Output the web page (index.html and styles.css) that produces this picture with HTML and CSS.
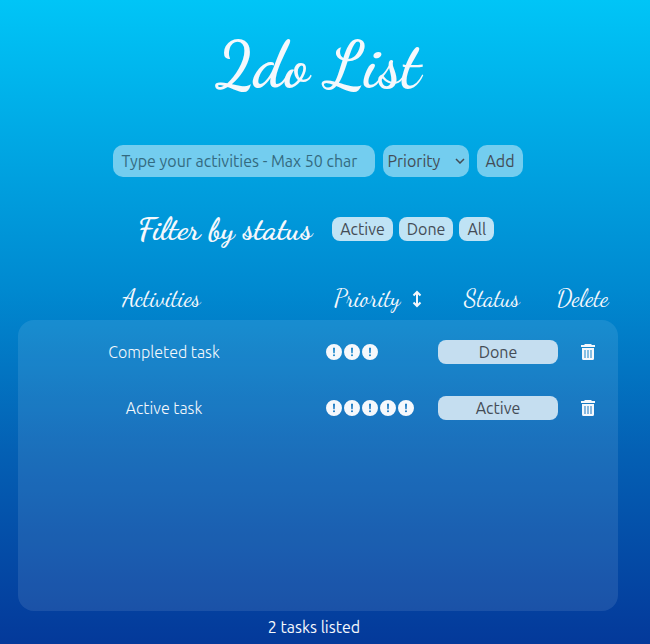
FILE: index.html
```html
<!DOCTYPE html>
<html lang="en">
<head>
<meta charset="utf-8">
<meta name="viewport" content="width=device-width, initial-scale=1">
<title>2do List</title>
<link rel="stylesheet" href="styles.css">
</head>
<body>
<svg class="sprite" aria-hidden="true">
  <symbol id="alert" viewBox="0 0 18 18"><path fill-rule="evenodd" d="M9 1a8 8 0 1 0 0 16A8 8 0 0 0 9 1zM8 4.800h2l-.3 5.400H8.300zM9 11.300a1 1 0 1 1 0 2 1 1 0 0 1 0-2z"/></symbol>
  <symbol id="trash" viewBox="0 0 16 18"><path fill-rule="evenodd" d="M5 1h6l1 1h3v2H1V2h3zM2 5h12v10.500a1.500 1.500 0 0 1-1.500 1.500h-9A1.500 1.500 0 0 1 2 15.500zM4.500 7v8h1V7zM7.500 7v8h1V7zM10.500 7v8h1V7z"/></symbol>
</svg>
<main class="app">
  <h1 class="title">2do List</h1>
  <form class="new-task">
    <input class="field field-text" type="text" maxlength="50" aria-label="Activity" placeholder="Type your activities - Max 50 char">
    <span class="select-wrap">
      <select class="field field-select" aria-label="Priority">
        <option>Priority</option><option>1</option><option>2</option><option>3</option><option>4</option><option>5</option>
      </select>
      <svg class="chevron" viewBox="0 0 10 6" aria-hidden="true"><path d="M1 1l4 4 4-4"/></svg>
    </span>
    <button class="field field-add" type="button">Add</button>
  </form>
  <section class="filter">
    <h2 class="filter-title">Filter by status</h2>
    <div class="filter-buttons">
      <button class="pill" type="button">Active</button>
      <button class="pill" type="button">Done</button>
      <button class="pill" type="button">All</button>
    </div>
  </section>
  <table class="tasks">
    <thead>
      <tr class="head-row">
        <th scope="col">Activities</th>
        <th scope="col" class="head-priority">Priority
          <button class="icon-button" type="button" aria-label="Sort by priority"><svg class="sort" viewBox="0 0 10 18" aria-hidden="true"><path d="M5 2v14M1.500 5.500L5 2l3.500 3.500M1.500 12.500L5 16l3.500-3.500"/></svg></button>
        </th>
        <th scope="col">Status</th>
        <th scope="col">Delete</th>
      </tr>
    </thead>
    <tbody class="panel">
      <tr class="task-row">
        <td class="task-name">Completed task</td>
        <td class="task-priority"><svg class="alert"><use href="#alert"/></svg><svg class="alert"><use href="#alert"/></svg><svg class="alert"><use href="#alert"/></svg></td>
        <td class="task-status"><button class="pill pill-wide" type="button">Done</button></td>
        <td class="task-delete"><button class="icon-button" type="button" aria-label="Delete task"><svg class="trash"><use href="#trash"/></svg></button></td>
      </tr>
      <tr class="task-row">
        <td class="task-name">Active task</td>
        <td class="task-priority"><svg class="alert"><use href="#alert"/></svg><svg class="alert"><use href="#alert"/></svg><svg class="alert"><use href="#alert"/></svg><svg class="alert"><use href="#alert"/></svg><svg class="alert"><use href="#alert"/></svg></td>
        <td class="task-status"><button class="pill pill-wide" type="button">Active</button></td>
        <td class="task-delete"><button class="icon-button" type="button" aria-label="Delete task"><svg class="trash"><use href="#trash"/></svg></button></td>
      </tr>
    </tbody>
  </table>
  <p class="count">2 tasks listed</p>
</main>
</body>
</html>
```
FILE: styles.css
```css
* {
  box-sizing: border-box;
}

html {
  min-height: 100%;
  background: linear-gradient(#00c5f7, #0089d0 45%, #0460b4 70%, #04399a);
}

body {
  margin: 0;
  color: #f5f8fc;
  font: 16px/24px Ubuntu, "Noto Sans", sans-serif;
}

button,
input,
select {
  margin: 0;
  border: 0;
  font: inherit;
  color: #444c55;
}

button {
  cursor: pointer;
}

.sprite {
  position: absolute;
  width: 0;
  height: 0;
}

.app {
  padding: 24px 32px 4px 18px;
}

.title,
.filter-title,
.head-row {
  font-family: "Dancing Script", "Liberation Serif", serif;
}

.title {
  margin: 0;
  text-align: center;
  font-size: 64px;
  line-height: 84px;
  font-weight: 700;
}

.new-task {
  display: flex;
  justify-content: center;
  gap: 8px;
  margin-top: 37px;
}

.field {
  height: 32px;
  padding: 0 8px;
  border-radius: 10px;
  background: #73cdef;
}

.field-text {
  width: 262px;
}

.field-text::placeholder {
  color: #336a80;
  opacity: 1;
}

.select-wrap {
  position: relative;
}

.field-select {
  width: 86px;
  padding: 0 4px;
  appearance: none;
}

.chevron {
  position: absolute;
  right: 4px;
  top: 13px;
  width: 10px;
  height: 6px;
  fill: none;
  stroke: #444c55;
  stroke-width: 1.500;
  pointer-events: none;
}

.filter {
  display: flex;
  justify-content: center;
  align-items: center;
  gap: 20px;
  margin-top: 32px;
  padding-right: 4px;
}

.filter-title {
  margin: 0;
  font-size: 32px;
  line-height: 40px;
  font-weight: 700;
}

.filter-buttons {
  display: flex;
  gap: 6px;
}

.pill {
  height: 24px;
  padding: 0 8px;
  border-radius: 8px;
  background: #bfe3f5;
}

.tasks,
.panel,
.tasks thead {
  display: block;
}

.tasks {
  margin-top: 29px;
}

.head-row,
.task-row {
  display: grid;
  align-items: center;
}

.head-row {
  grid-template-columns: 1fr 132px 110px 71px;
  height: 42px;
  font-size: 24px;
}

.head-row th {
  padding: 0;
  font-weight: 400;
}

.head-row .head-priority {
  display: flex;
  align-items: center;
  gap: 12px;
  padding-left: 29px;
}

.icon-button {
  display: inline-flex;
  padding: 0;
  background: none;
}

.sort {
  width: 10px;
  height: 18px;
  fill: none;
  stroke: #f5f8fc;
  stroke-width: 2;
}

.panel {
  min-height: 45.2vh;
  padding-top: 4px;
  border-radius: 16px;
  background: rgba(235, 242, 255, 0.1);
}

.task-row {
  grid-template-columns: 1fr 128px 120px 60px;
  height: 56px;
}

.task-row td {
  padding: 0;
}

.task-name,
.task-delete {
  text-align: center;
}

.task-name {
  font-weight: 300;
}

.task-row .task-priority {
  display: flex;
  padding-left: 15px;
}

.alert {
  width: 18px;
  height: 18px;
  fill: #f5f8fc;
}

.pill-wide {
  width: 100%;
  background: #c5def0;
}

.task-delete {
  display: flex;
  justify-content: center;
}

.trash {
  width: 16px;
  height: 18px;
  fill: #f5f8fc;
}

.count {
  margin: 4px 0 0;
  padding-right: 8px;
  text-align: center;
}
```
